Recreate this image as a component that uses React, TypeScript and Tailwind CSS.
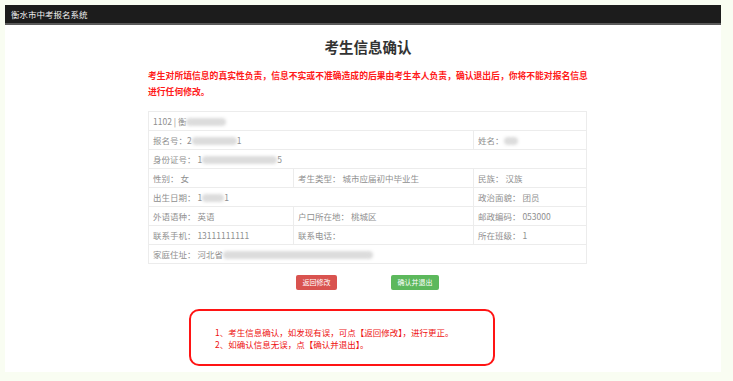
import React from 'react';

const cjk = { fontFamily: '"Noto Sans CJK SC", "Liberation Sans", sans-serif' };

function Blur({ w }: { w: number }) {
  return (
    <span
      className="inline-block h-[8px] align-middle bg-[#dcdcdc] blur-[1.5px] rounded-sm"
      style={{ width: w }}
    />
  );
}

function Cell({ children, span = 1 }: { children: React.ReactNode; span?: number }) {
  return (
    <td colSpan={span} className="border border-[#ececec] pl-[4px] h-[19px] text-[8.5px] text-[#8f8f8f] whitespace-nowrap">
      {children}
    </td>
  );
}

export default function App() {
  return (
    <div className="min-h-screen bg-[#f9fdf2] pt-[5px] pl-[5px] pr-[12px] pb-[9px]" style={cjk}>
      <div className="bg-white h-[367px] flex flex-col">
        <div className="h-[20px] bg-[#1c1c1c] border-b-2 border-[#5a5a5a] text-[#eee] text-[8.5px] pl-[6px] flex items-center">
          衡水市中考报名系统
        </div>

        <h1 className="mt-[12px] h-[20px] leading-[20px] text-center text-[14.5px] font-bold text-[#333] ml-[10px]">
          考生信息确认
        </h1>

        <div className="mt-[11px] ml-[143px] w-[439px] text-[8.8px] leading-[16px] font-bold text-[#ff1a1a] whitespace-nowrap">
          考生对所填信息的真实性负责，信息不实或不准确造成的后果由考生本人负责，确认退出后，你将不能对报名信息
          <br />
          进行任何修改。
        </div>

        <table className="mt-[11px] ml-[143px] w-[439px] border-collapse table-fixed">
          <colgroup>
            <col className="w-[145px]" />
            <col className="w-[180px]" />
            <col />
          </colgroup>
          <tbody>
            <tr>
              <Cell span={3}>1102 | 衡<Blur w={40} /></Cell>
            </tr>
            <tr>
              <Cell span={2}>报名号：2<Blur w={45} />1</Cell>
              <Cell>姓名：<Blur w={14} /></Cell>
            </tr>
            <tr>
              <Cell span={3}>身份证号： 1<Blur w={75} />5</Cell>
            </tr>
            <tr>
              <Cell>性别： 女</Cell>
              <Cell>考生类型： 城市应届初中毕业生</Cell>
              <Cell>民族： 汉族</Cell>
            </tr>
            <tr>
              <Cell span={2}>出生日期： 1<Blur w={22} />1</Cell>
              <Cell>政治面貌： 团员</Cell>
            </tr>
            <tr>
              <Cell>外语语种： 英语</Cell>
              <Cell>户口所在地： 桃城区</Cell>
              <Cell>邮政编码： 053000</Cell>
            </tr>
            <tr>
              <Cell>联系手机： 13111111111</Cell>
              <Cell>联系电话：</Cell>
              <Cell>所在班级： 1</Cell>
            </tr>
            <tr>
              <Cell span={3}>家庭住址： 河北省<Blur w={150} /></Cell>
            </tr>
          </tbody>
        </table>

        <div className="mt-[11px] ml-[143px] w-[439px] flex justify-center gap-[54px]">
          <button className="w-[41px] h-[15px] rounded-[2px] bg-[#d9534f] text-white text-[7px] leading-[15px]">返回修改</button>
          <button className="w-[48px] h-[15px] rounded-[2px] bg-[#5cb85c] text-white text-[7px] leading-[15px]">确认并退出</button>
        </div>

        <div className="mt-[19px] ml-[184px] w-[306px] h-[57px] border-2 border-[#ff1414] rounded-[10px] flex flex-col justify-center pl-[24px] text-[8.5px] leading-[12px] text-[#ee1111]">
          <p>1、考生信息确认，如发现有误，可点【返回修改】，进行更正。</p>
          <p>2、如确认信息无误，点【确认并退出】。</p>
        </div>
      </div>
    </div>
  );
}
